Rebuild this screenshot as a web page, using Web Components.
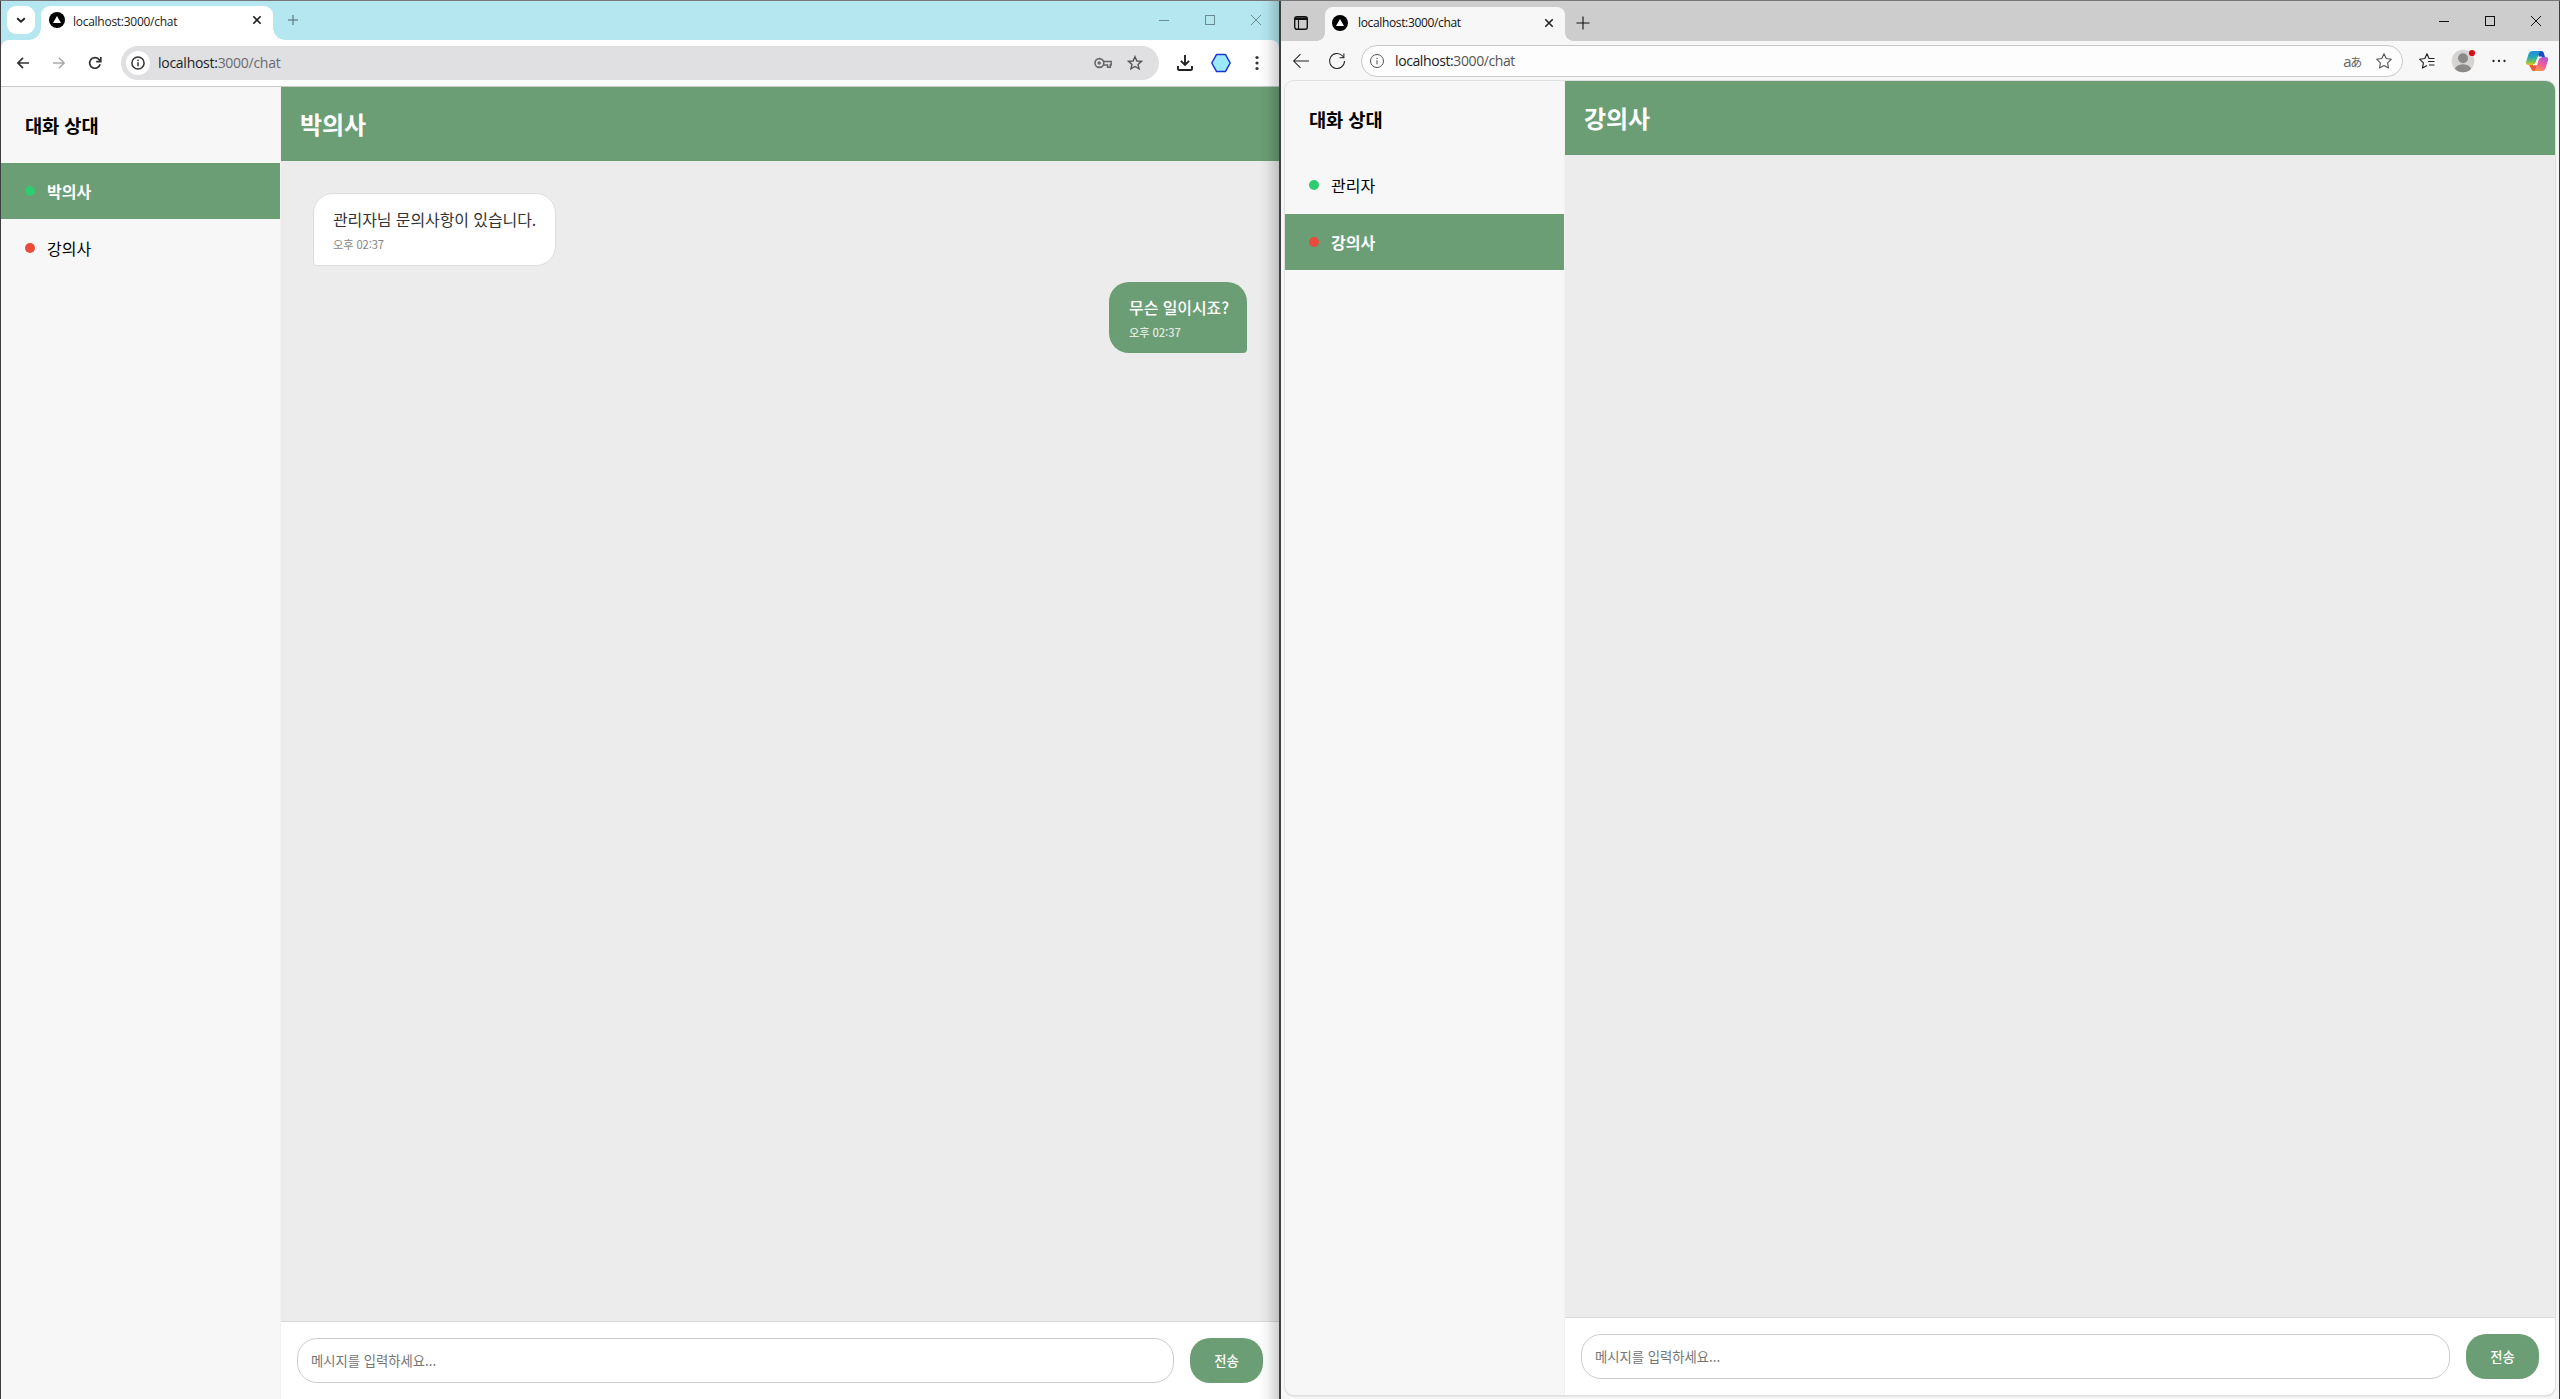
<!DOCTYPE html>
<html lang="ko">
<head>
<meta charset="utf-8">
<title>localhost:3000/chat</title>
<style>
html,body{margin:0;height:100%;overflow:hidden}
body{font-family:"Noto Sans CJK KR","Noto Sans",sans-serif;background:#4a4a4d}
desktop-split{height:1399px;width:2560px}
</style>
</head>
<body>
<desktop-split>
  <chrome-window slot="left" address="localhost:3000/chat">
    <chat-page peer="박의사">
      <contact-item slot="contacts" status="online" active>박의사</contact-item>
      <contact-item slot="contacts" status="offline">강의사</contact-item>
      <chat-bubble time="오후 02:37">관리자님 문의사항이 있습니다.</chat-bubble>
      <chat-bubble mine time="오후 02:37">무슨 일이시죠?</chat-bubble>
    </chat-page>
  </chrome-window>
  <edge-window slot="right" address="localhost:3000/chat">
    <chat-page peer="강의사">
      <contact-item slot="contacts" status="online">관리자</contact-item>
      <contact-item slot="contacts" status="offline" active>강의사</contact-item>
    </chat-page>
  </edge-window>
</desktop-split>

<script>
const ICONS = {
  chevron: [12, '<path d="M2.2 4.2 6 7.8l3.8-3.6" stroke="#222" stroke-width="1.9"/>'],
  site: [16, '<circle cx="8" cy="8" r="8" fill="#000"/><path d="M8 4 12 11H4Z" fill="#fff"/>'],
  close: [12, '<path d="M2.3 2.3 9.7 9.7M9.7 2.3 2.3 9.7" stroke="#222" stroke-width="1.6"/>'],
  plusGrey: [12, '<path d="M6 1v10M1 6h10" stroke="#6f8d96" stroke-width="1.5"/>'],
  plus: [14, '<path d="M7 .5v13M.5 7h13" stroke="#111" stroke-width="1.1"/>'],
  min: [10, '<path d="M0 5.5h10" stroke="currentColor"/>'],
  max: [10, '<rect x=".5" y=".5" width="9" height="9" stroke="currentColor"/>'],
  quit: [10, '<path d="M0 0 10 10M10 0 0 10" stroke="currentColor"/>'],
  back: [12, '<path d="M12 6H1.2M6 .8 .9 6 6 11.2" stroke="#333" stroke-width="1.7"/>'],
  forward: [12, '<path d="M0 6h10.8M6 .8 11.1 6 6 11.2" stroke="#aaa" stroke-width="1.6"/>'],
  reload: [14, '<path d="M12.1 8.2A5.3 5.3 0 1 1 10.9 3.4L12.4 5" stroke="#333" stroke-width="1.7"/><path d="M12.8 1v4.6H8.2" stroke="#333" stroke-width="1.7"/>'],
  info: [14, '<circle cx="7" cy="7" r="6.1" stroke="#333" stroke-width="1.5"/><path d="M7 6.3v4M7 3.6v1.5" stroke="#333" stroke-width="1.5"/>'],
  key: [18, '<circle cx="5.4" cy="9" r="4.4" stroke="#666" stroke-width="1.6"/><circle cx="5.2" cy="9" r="1.7" fill="#666"/><path d="M9.8 7.6h7.4v3.4h-.9v2.2h-2.7V11H9.8" stroke="#666" stroke-width="1.5"/>'],
  star: [16, '<path d="M8 1.8 9.9 6l4.6.4-3.5 3 1.1 4.5L8 11.5l-4.1 2.4L5 9.4l-3.5-3L6.100 6Z" stroke="#555" stroke-width="1.4"/>'],
  download: [16, '<path d="M8 0v9.6M3.900 5.800 8 9.900l4.100-4.100M1 11v3q0 1 1 1h12q1 0 1-1v-3" stroke="#222" stroke-width="1.9"/>'],
  hexagon: [20, '<path d="M5.600 1.400h8.800L19.200 10l-4.800 8.600H5.600L.8 10Z" fill="#9be9fb" stroke="#1a35cf" stroke-width="1.5" stroke-linejoin="round"/>'],
  dotsV: [16, '<g fill="#333"><circle cx="8" cy="2.500" r="1.600"/><circle cx="8" cy="8" r="1.600"/><circle cx="8" cy="13.500" r="1.600"/></g>'],
  dotsH: [14, '<g fill="#222"><circle cx="1.500" cy="7" r="1.150"/><circle cx="7" cy="7" r="1.150"/><circle cx="12.500" cy="7" r="1.150"/></g>'],
  panes: [14, '<rect x=".7" y=".7" width="12.600" height="12.600" rx="2.200" stroke="#111" stroke-width="1.400"/><path d="M.7 1.500h12.600V4H.7Z" fill="#111"/><path d="M4.500 4v9" stroke="#111" stroke-width="1.100"/>'],
  edgeBack: [16, '<path d="M16 8H.8M7.500 1.200.7 8l6.800 6.800" stroke="#222" stroke-width="1.050"/>'],
  edgeReload: [16, '<path d="M15.500 8A7.500 7.500 0 1 1 13.600 3l1 1.300" stroke="#222" stroke-width="1.050"/><path d="M14.900.5v4.300h-4.400" stroke="#222" stroke-width="1.050"/>'],
  edgeInfo: [14, '<circle cx="7" cy="7" r="6.500" stroke="#555"/><path d="M7 6.200v4M7 3.800v1.300" stroke="#555" stroke-width="1.100"/>'],
  edgeStar: [16, '<path d="M8 .8 10.200 5.500l5.200.7-3.800 3.600.9 5.300L8 12.600l-4.500 2.500.9-5.300L.6 6.200l5.200-.7Z" stroke="#555" stroke-width="1.100" stroke-linejoin="round"/>'],
  favourites: [16, '<path d="M15.500 5.500H10L8 .8 5.800 5.500.6 6.200l3.800 3.600-.9 5.300L8 12.600M9 8.500h6.500M10 12h5.500" stroke="#222" stroke-width="1.150" stroke-linejoin="round"/>'],
  avatar: [24, '<defs><clipPath id="c"><circle cx="12" cy="12" r="11.300"/></clipPath></defs><circle cx="12" cy="12" r="11.300" fill="#d5d4d2"/><g fill="#8b8a89" clip-path="url(#c)"><circle cx="12" cy="9.300" r="5"/><ellipse cx="12" cy="21.500" rx="8.500" ry="6.200"/></g><circle cx="21" cy="4" r="3.100" fill="#dc0d18"/>'],
  copilot: [24, '<defs><linearGradient id="a" x1="0" y1="0" x2="0" y2="1"><stop stop-color="#1b8fe2"/><stop offset=".45" stop-color="#27a9b0"/><stop offset=".75" stop-color="#6fbf5a"/><stop offset="1" stop-color="#f1c51b"/></linearGradient><linearGradient id="b" x1=".8" y1="0" x2=".2" y2="1"><stop stop-color="#a755e8"/><stop offset=".5" stop-color="#ef5c98"/><stop offset="1" stop-color="#fb9a48"/></linearGradient></defs><path d="M12 2h4.500q1.700 0 2.300 2l1.200 4H14Z" fill="#1b48c5"/><path d="M4 16H9l3 0-.5 3-1.500 3H8.500Q6.900 22 6.300 20Z" fill="#ee5630"/><path d="M7.300 2H16q-1.600.6-2.200 2.600l-2.600 8.600q-.8 2.800-3.200 2.800H3.500Q.3 16 1.200 12.500l2.500-8Q4.500 2 7.300 2Z" fill="url(#a)"/><path d="M16.800 22H8.500q1.600-.6 2.200-2.600l2.600-8.600q.8-2.800 3.200-2.800h4.200q3.200 0 2.300 3.500l-2.600 8Q19.500 22 16.800 22Z" fill="url(#b)"/><path d="M12.900 8H16.500Q14.100 8 13.300 10.800L11.700 16H8q2.400 0 3.200-2.800Z" fill="#fbfbfb" stroke="#fbfbfb" stroke-width=".8"/>']
};

class UiIcon extends HTMLElement {
  connectedCallback() {
    const [size, body] = ICONS[this.getAttribute('name')];
    this.attachShadow({mode: 'open'}).innerHTML =
      `<style>:host{display:flex;align-items:center;justify-content:center;flex:none}svg{display:block;overflow:visible}</style>
       <svg width="${size}" height="${size}" viewBox="0 0 ${size} ${size}" fill="none">${body}</svg>`;
  }
}

class DesktopSplit extends HTMLElement {
  constructor() {
    super();
    this.attachShadow({mode: 'open'}).innerHTML = `
      <style>
        :host{display:grid;grid-template-columns:1278px 1278px;column-gap:2px;padding:1px 1px 0;box-sizing:border-box;background:linear-gradient(#77777b 0 1px,#3d3d42 1px)}
        ::slotted(*){min-width:0}
      </style><slot name="left"></slot><slot name="right"></slot>`;
  }
}

class ChromeWindow extends HTMLElement {
  connectedCallback() {
    const address = this.getAttribute('address');
    const [host, path] = address.split(/(?<=:)/);
    this.attachShadow({mode: 'open'}).innerHTML = `
      <style>
        :host{display:flex;flex-direction:column;position:relative;background:#b5e7f1;height:1398px}
        :host::after{content:"";position:absolute;inset:0 0 0 auto;width:20px;background:linear-gradient(90deg,transparent,rgba(0,0,0,.04) 40%,rgba(0,0,0,.19));pointer-events:none}
        .tabs{display:flex;height:39px;padding:5px 0 0 6px;box-sizing:border-box}
        .search{width:28px;height:28px;border-radius:9px;background:#fff;margin-right:6px}
        .tab{display:flex;align-items:center;width:232px;height:34px;background:#fff;border-radius:9px 9px 0 0;position:relative;box-sizing:border-box;padding:0 8px 6px}
        .tab::before,.tab::after{content:"";position:absolute;bottom:0;width:12px;height:12px}
        .tab::before{left:-12px;background:radial-gradient(circle at 0 0,transparent 11.5px,#fff 12px)}
        .tab::after{right:-12px;background:radial-gradient(circle at 100% 0,transparent 11.500px,#fff 12px)}
        .tab span{flex:1;margin-left:8px;padding-top:3px;font:12px/16px "Open Sans",sans-serif;color:#222;letter-spacing:-.27px;white-space:nowrap}
        .plus{width:40px;height:28px}
        .controls{display:flex;margin-left:auto;height:28px;color:#688b94}
        .controls ui-icon{width:46px}
        .bar{display:flex;align-items:center;height:46px;background:#fff;padding:0 4px 0 4px;border-radius:8px 8px 0 0;border-bottom:1px solid #c7c8ca;box-sizing:content-box}
        .bar>ui-icon{width:36px;height:36px}
        .omni{display:flex;align-items:center;flex:1;height:34px;border-radius:17px;background:#e0e0e3;margin:0 8px;padding:0 8px 0 5px;box-sizing:border-box}
        .info{width:24px;height:24px;border-radius:50%;background:#fff}
        .url{flex:1;margin-left:8px;font:14px/20px "Open Sans",sans-serif;color:#6a6b6e;letter-spacing:-.27px}
        .url b{font-weight:400;color:#222}
        .omni .tool{width:32px}
        .page{flex:1;display:flex;min-height:0}
        ::slotted(*){flex:1}
      </style>
      <div class="tabs">
        <ui-icon class="search" name="chevron"></ui-icon>
        <div class="tab"><ui-icon name="site"></ui-icon><span>${address}</span><ui-icon name="close" style="margin-right:2px"></ui-icon></div>
        <ui-icon class="plus" name="plusGrey"></ui-icon>
        <div class="controls"><ui-icon name="min"></ui-icon><ui-icon name="max"></ui-icon><ui-icon name="quit"></ui-icon></div>
      </div>
      <div class="bar">
        <ui-icon name="back"></ui-icon><ui-icon name="forward"></ui-icon><ui-icon name="reload"></ui-icon>
        <div class="omni"><ui-icon class="info" name="info"></ui-icon><div class="url"><b>${host}</b>${path}</div>
          <ui-icon class="tool" name="key"></ui-icon><ui-icon class="tool" name="star"></ui-icon></div>
        <ui-icon name="download"></ui-icon><ui-icon name="hexagon"></ui-icon><ui-icon name="dotsV"></ui-icon>
      </div>
      <div class="page"><slot></slot></div>`;
  }
}

class EdgeWindow extends HTMLElement {
  connectedCallback() {
    const address = this.getAttribute('address');
    const [host, path] = address.split(/(?<=:)/);
    this.attachShadow({mode: 'open'}).innerHTML = `
      <style>
        :host{display:flex;flex-direction:column;background:#f7f7f7;height:1398px}
        .tabs{display:flex;height:40px;padding:6px 0 0;box-sizing:border-box;background:#cdcdcd}
        .panes{width:40px;height:32px;margin-right:4px}
        .tab{display:flex;align-items:center;width:240px;height:34px;background:#f7f7f7;border-radius:8px 8px 0 0;position:relative;box-sizing:border-box;padding:0 10px 2px 7px}
        .tab::before,.tab::after{content:"";position:absolute;bottom:0;width:8px;height:8px}
        .tab::before{left:-8px;background:radial-gradient(circle at 0 0,transparent 7.500px,#f7f7f7 8px)}
        .tab::after{right:-8px;background:radial-gradient(circle at 100% 0,transparent 7.500px,#f7f7f7 8px)}
        .tab span{flex:1;margin-left:10px;font:12px/16px "Open Sans",sans-serif;color:#111;letter-spacing:-.35px;white-space:nowrap}
        .plus{width:35px;height:32px}
        .controls{display:flex;margin-left:auto;height:28px;color:#111}
        .controls ui-icon{width:46px}
        .bar{display:flex;align-items:center;height:40px;padding:0 2px}
        .bar>ui-icon{width:36px;height:36px}
        .omni{display:flex;align-items:center;flex:1;height:32px;border:1px solid #c8c8c8;border-radius:16px;background:#fdfdfd;margin:0 6px;padding:0 2px 0 8px;box-sizing:border-box}
        .url{flex:1;margin-left:11px;font:14px/20px "Open Sans",sans-serif;color:#555;letter-spacing:-.4px}
        .url b{font-weight:400;color:#222}
        .lang{font:12px/20px "Noto Sans CJK JP",sans-serif;color:#666;letter-spacing:-1.5px;width:32px;text-align:center;white-space:nowrap}
        .lang b{font:15px/20px "Open Sans",sans-serif}
        .omni .tool{width:32px}
        .page{flex:1;display:flex;min-height:0;margin:0 4px 4px;border-radius:9px;overflow:hidden;box-shadow:0 0 0 1px #e2e2e2,0 1px 2px #bbb}
        ::slotted(*){flex:1}
      </style>
      <div class="tabs">
        <ui-icon class="panes" name="panes"></ui-icon>
        <div class="tab"><ui-icon name="site"></ui-icon><span>${address}</span><ui-icon name="close"></ui-icon></div>
        <ui-icon class="plus" name="plus"></ui-icon>
        <div class="controls"><ui-icon name="min"></ui-icon><ui-icon name="max"></ui-icon><ui-icon name="quit"></ui-icon></div>
      </div>
      <div class="bar">
        <ui-icon name="edgeBack"></ui-icon><ui-icon name="edgeReload"></ui-icon>
        <div class="omni"><ui-icon name="edgeInfo"></ui-icon><div class="url"><b>${host}</b>${path}</div>
          <span class="lang"><b>a</b>あ</span><ui-icon class="tool" name="edgeStar"></ui-icon></div>
        <ui-icon name="favourites"></ui-icon><ui-icon name="avatar"></ui-icon><ui-icon name="dotsH"></ui-icon><ui-icon name="copilot" style="width:40px"></ui-icon>
      </div>
      <div class="page"><slot></slot></div>`;
  }
}

class ChatPage extends HTMLElement {
  connectedCallback() {
    this.attachShadow({mode: 'open'}).innerHTML = `
      <style>
        :host{display:flex;min-width:0;background:#ececec}
        aside{width:280px;box-sizing:border-box;background:#f7f7f7;border-right:1px solid #f1f1f1;flex:none}
        h2{margin:0;padding:24px 24px 24px;font-size:18.720px;letter-spacing:-.1px;line-height:28px;height:76px;box-sizing:border-box;color:#000}
        main{flex:1;display:flex;flex-direction:column;min-width:0}
        header{height:74px;display:flex;align-items:center;padding:0 19px 2px;background:#6b9e75;color:#fff;font-size:24px;font-weight:700;letter-spacing:-.1px;box-sizing:border-box}
        .log{flex:1;display:flex;flex-direction:column;gap:16px;padding:32px;align-items:flex-start}
        form{display:flex;gap:16px;padding:16px;background:#fff;border-top:1px solid #d9d9d9;margin:0}
        input{flex:1;min-width:0;height:45px;box-sizing:border-box;border:1px solid #ccc;border-radius:20px;padding:0 13px;font:13.333px "Noto Sans CJK KR",sans-serif;background:#fff}
        input::placeholder{color:#757575;opacity:1}
        button{width:73px;height:45px;border:0;border-radius:20px;background:#6b9e75;color:#fff;padding:0;font:500 13.333px "Noto Sans CJK KR",sans-serif}
      </style>
      <aside><h2>대화 상대</h2><slot name="contacts"></slot></aside>
      <main><header>${this.getAttribute('peer')}</header><div class="log"><slot></slot></div>
      <form><input placeholder="메시지를 입력하세요..."><button type="button">전송</button></form></main>`;
  }
}

class ContactItem extends HTMLElement {
  constructor() {
    super();
    this.attachShadow({mode: 'open'}).innerHTML = `
      <style>
        :host{display:flex;align-items:center;gap:12px;height:56px;margin-bottom:1px;padding:0 24px;box-sizing:border-box;font-size:16px;color:#000}
        :host([active]){background:#6b9e75;color:#fff;font-weight:700}
        i{width:10px;height:10px;border-radius:50%;background:#e74c3c}
        :host([status=online]) i{background:#2ecc71}
      </style><i></i><slot></slot>`;
  }
}

class ChatBubble extends HTMLElement {
  connectedCallback() {
    this.attachShadow({mode: 'open'}).innerHTML = `
      <style>
        :host{display:block;box-sizing:border-box;height:73px;padding:12px 19px;background:#fff;border:1px solid #ddd;border-radius:20px 20px 20px 4px;color:#333;font-size:16px;letter-spacing:-.1px;line-height:26px}
        :host([mine]){align-self:flex-end;height:71px;padding:12px 18px 12px 20px;border:0;border-radius:20px 20px 4px 20px;background:#6b9e75;color:#fff;font-weight:500}
        small{display:block;margin-top:4px;font-size:11.200px;line-height:17px;letter-spacing:-.1px;opacity:.8;color:#666}
        :host([mine]) small{color:#fff;opacity:.8}
      </style><slot></slot><small>${this.getAttribute('time')}</small>`;
  }
}

customElements.define('ui-icon', UiIcon);
customElements.define('chat-bubble', ChatBubble);
customElements.define('contact-item', ContactItem);
customElements.define('chat-page', ChatPage);
customElements.define('chrome-window', ChromeWindow);
customElements.define('edge-window', EdgeWindow);
customElements.define('desktop-split', DesktopSplit);
</script>
</body>
</html>
